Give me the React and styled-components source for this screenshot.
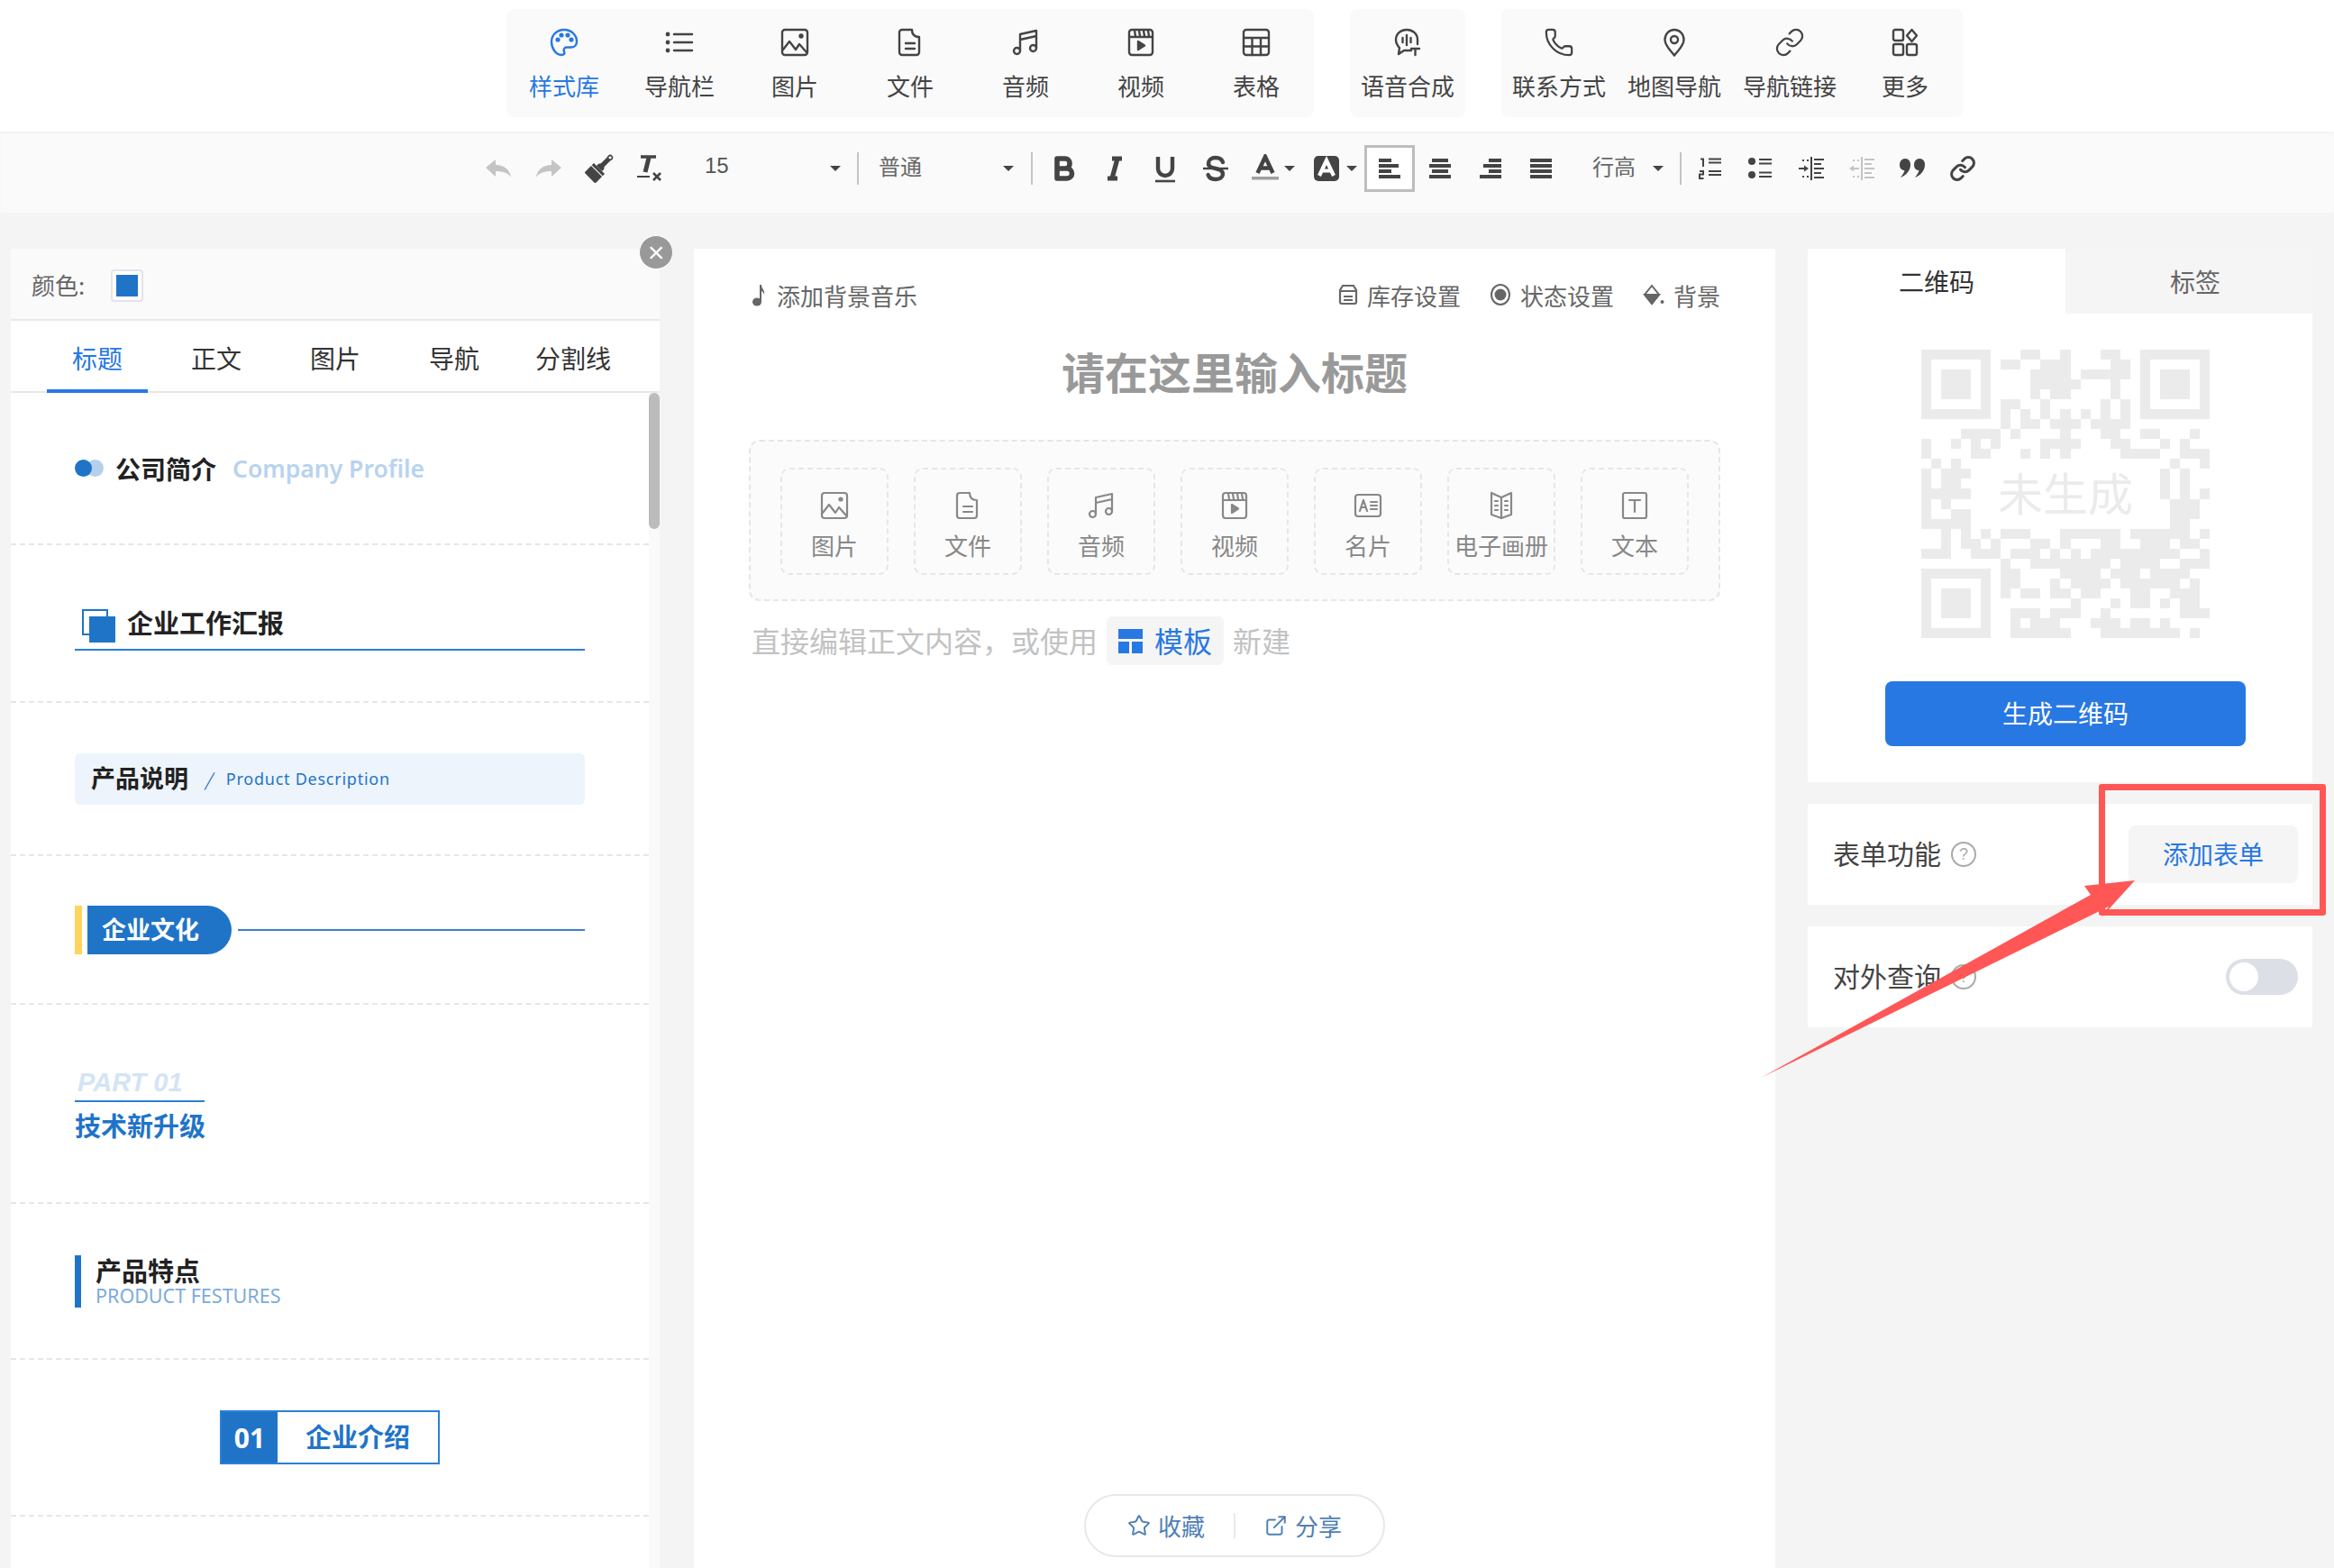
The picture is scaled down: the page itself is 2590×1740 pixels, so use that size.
import styled, { createGlobalStyle } from "styled-components";
import { Phone, Link, Star, ExternalLink } from "lucide-react";

const GlobalStyle = createGlobalStyle`
  html, body {
    margin: 0;
    padding: 0;
    background: #f4f4f4;
    font-family: "Noto Sans CJK SC", "Noto Sans", sans-serif;
    color: #333;
  }
  * { box-sizing: border-box; }
`;

const Icon = ({ size = 32, box = 32, sw = 2.4, children }) => (
  <svg width={size} height={size} viewBox={`0 0 ${box} ${box}`} fill="none" stroke="currentColor" strokeWidth={sw} strokeLinecap="round" strokeLinejoin="round">
    {children}
  </svg>
);

const Tool = ({ w = 36, h = 36, box = "0 0 18 18", sw = 2, children }) => (
  <svg width={w} height={h} viewBox={box} fill="none" stroke="currentColor" strokeWidth={sw} strokeLinecap="round" strokeLinejoin="round">
    {children}
  </svg>
);

const Palette = p => (
  <Icon {...p}>
    <path d="M16 2C8 2 2 8 2 15.500 2 23 7 30 13 30c3 0 4-2 3-4-1-2 0-4.500 3-4.500h5c4 0 6-3 6-6.500C30 8 24 2 16 2Z" />
    <circle cx="9" cy="13" r="1.400" fill="currentColor" />
    <circle cx="13" cy="8" r="1.400" fill="currentColor" />
    <circle cx="20" cy="8" r="1.400" fill="currentColor" />
    <circle cx="24" cy="13" r="1.400" fill="currentColor" />
  </Icon>
);
const ListIcon = p => (
  <Icon {...p}>
    <path d="M10 7h20M10 16h20M10 25h20" />
    <circle cx="3" cy="7" r="1.200" fill="currentColor" />
    <circle cx="3" cy="16" r="1.200" fill="currentColor" />
    <circle cx="3" cy="25" r="1.200" fill="currentColor" />
  </Icon>
);
const ImageIcon = p => (
  <Icon {...p}>
    <rect x="2" y="2" width="28" height="28" rx="3" />
    <path d="M3 24l7-9 7 9 4-6 8 9" />
    <circle cx="23" cy="9" r="1.500" fill="currentColor" />
  </Icon>
);
const FileIcon = p => (
  <Icon {...p}>
    <path d="M4 5a3 3 0 0 1 3-3h11c0 5 3 8 8 8v17a3 3 0 0 1-3 3H7a3 3 0 0 1-3-3Z" />
    <path d="M11 17h10M11 23h10" />
  </Icon>
);
const MusicIcon = p => (
  <Icon {...p}>
    <path d="M10 25V7l18-4v19M10 13l18-4" />
    <circle cx="6.500" cy="25.500" r="3.500" />
    <circle cx="24.500" cy="22.500" r="3.500" />
  </Icon>
);
const VideoIcon = p => (
  <Icon {...p}>
    <rect x="3" y="2" width="26" height="28" rx="3" />
    <path d="M3 10h26M9 3l1 6M14 3l1 6M19 3l1 6M24 3l1 6" />
    <path d="M13 15l7 4.500-7 4.500Z" fill="currentColor" />
  </Icon>
);
const TableIcon = p => (
  <Icon {...p}>
    <rect x="2" y="2" width="28" height="28" rx="3" />
    <path d="M2 11h28M2 20.500h28M11.500 11v19M21 11v19" />
  </Icon>
);
const VoiceIcon = p => (
  <Icon {...p}>
    <path d="M20 25H12l-6 4 1-7C4 19 3 16 3 13 3 6 9 2 15 2s12 4 12 11v5" />
    <path d="M15 8v11M10.500 11v5M19.500 11v5" />
    <path d="M20 23h9M24.500 23v7" />
  </Icon>
);
const PinIcon = p => (
  <Icon {...p}>
    <path d="M16 2C10 2 5.500 7 5.500 13c0 7 6.500 12 10.500 17.500C20 25 26.500 20 26.500 13 26.500 7 22 2 16 2Z" />
    <circle cx="16" cy="13" r="4" />
  </Icon>
);
const MoreIcon = p => (
  <Icon {...p}>
    <rect x="3" y="2" width="11" height="12" rx="2" />
    <path d="M23.500 2l5.500 6.500-5.500 6.500L18 8.500Z" />
    <rect x="3" y="18" width="11" height="12" rx="2" />
    <rect x="18" y="18" width="11" height="12" rx="2" />
  </Icon>
);
const CardIcon = p => (
  <Icon {...p}>
    <rect x="2" y="4" width="28" height="24" rx="3" />
    <path d="M7 22l4-12 4 12M8.500 18h5M19 12h7M19 16h7M19 20h7" />
  </Icon>
);
const BookIcon = p => (
  <Icon {...p}>
    <path d="M16 7 5 2v24l11 4 11-4V2Z" />
    <path d="M16 7v23M9 11h3M9 16h3M9 21h3M20 11h3M20 16h3M20 21h3" />
  </Icon>
);
const TextIcon = p => (
  <Icon {...p}>
    <rect x="3" y="2" width="26" height="28" rx="2" />
    <path d="M10 10h12M16 10v13" />
  </Icon>
);

const MODULES = [
  "10-11 14 18-19", "8-9 12-14 19-20", "11-14 16-20", "11-15 19", "11 13-14 19", "8-9 12 18 20",
  "8 10 12 14 16 18 20", "8 10-11 13-15 17-20", "4-7 9 14 18-19 22-23 27", "0 3 5 7 12-15 19-20 24 26",
  "0 5-6 10 12 14 20-23 26-28", "1 3 25 28", "0 2-4 24 26", "0 2-3 24 26", "0-4 24 26 28", "0 2 25-27",
  "0 3-4 25-27", "0-4 25-26", "2 4 6 8-10 14-19 21-26 28", "2 4-5 7 11-12 14 18-19 22-24 26-27",
  "0-2 5-7 9-11 13 15 17-25 28", "8 11-18 20-23 26-28", "8-9 14-17 19-21 23-26", "8-9 13 15-18 20-25 27",
  "8 10-11 13-14 16-17 21-22 25-27", "15 19 21-22 24 26-27", "9-11 13-15 18 26-28", "9 11-13 17-19 21-22 24",
  "9-14 18-25 27",
];

const Finder = ({ x, y }) => (
  <g>
    <path d={`M${x} ${y}h7v7h-7ZM${x + 1} ${y + 1}v5h5v-5Z`} fillRule="evenodd" />
    <rect x={x + 2} y={y + 2} width="3" height="3" />
  </g>
);

const QrDrawing = () => (
  <svg width="320" height="320" viewBox="0 0 29 29" fill="#ebebeb" shapeRendering="crispEdges">
    <Finder x={0} y={0} />
    <Finder x={22} y={0} />
    <Finder x={0} y={22} />
    {MODULES.map((row, y) =>
      row.split(" ").map(part => {
        const [a, b = a] = part.split("-").map(Number);
        return <rect key={`${y}-${a}`} x={a} y={y} width={b - a + 1} height="1" />;
      }),
    )}
  </svg>
);

const topGroups = [
  [
    { label: "样式库", icon: <Palette />, active: true },
    { label: "导航栏", icon: <ListIcon /> },
    { label: "图片", icon: <ImageIcon /> },
    { label: "文件", icon: <FileIcon /> },
    { label: "音频", icon: <MusicIcon /> },
    { label: "视频", icon: <VideoIcon /> },
    { label: "表格", icon: <TableIcon /> },
  ],
  [{ label: "语音合成", icon: <VoiceIcon /> }],
  [
    { label: "联系方式", icon: <Phone size={34} strokeWidth={1.6} /> },
    { label: "地图导航", icon: <PinIcon /> },
    { label: "导航链接", icon: <Link size={34} strokeWidth={1.6} /> },
    { label: "更多", icon: <MoreIcon /> },
  ],
];

const cards = [
  { label: "图片", icon: <ImageIcon sw={2.2} /> },
  { label: "文件", icon: <FileIcon sw={2.2} /> },
  { label: "音频", icon: <MusicIcon sw={2.2} /> },
  { label: "视频", icon: <VideoIcon sw={2.2} /> },
  { label: "名片", icon: <CardIcon sw={2.2} /> },
  { label: "电子画册", icon: <BookIcon sw={2.2} /> },
  { label: "文本", icon: <TextIcon sw={2.2} /> },
];

const tabs = ["标题", "正文", "图片", "导航", "分割线"];

const alignRows = {
  left: [[0, 14], [0, 22], [0, 14], [0, 24]],
  center: [[3, 18], [0, 24], [3, 18], [0, 24]],
  right: [[10, 14], [4, 20], [10, 14], [0, 24]],
  justify: [[0, 24], [0, 24], [0, 24], [0, 24]],
};

const AlignIcon = ({ type }) => (
  <svg width="24" height="22" viewBox="0 0 24 22" fill="currentColor">
    {alignRows[type].map(([x, w], i) => (
      <rect key={i} x={x} y={i * 6} width={w} height="4" />
    ))}
  </svg>
);

const Comma = ({ x = 0 }) => (
  <path transform={`translate(${x} 0)`} d="M7 0c4 0 6 3 6 7 0 6-5 12-11 14 3-4 4.500-7 4.500-8C3 13 1 10.500 1 7 1 3 3.500 0 7 0Z" />
);

const IndentIcon = ({ flip }) => (
  <svg width="28" height="26" viewBox="0 0 28 26" fill="currentColor">
    <rect x="13" y="0" width="2" height="26" />
    {[0, 1, 2, 3, 4].map(i => (
      <rect key={i} x="17" y={2 + i * 5} width={i % 2 ? 8 : 11} height="2" />
    ))}
    <rect x="4" y="3" width="2" height="2" />
    <rect x="9" y="3" width="2" height="2" />
    <rect x="4" y="21" width="2" height="2" />
    <rect x="9" y="21" width="2" height="2" />
    {flip ? (
      <path d="M0 13l5-3.500V12h6v2H5v2.500Z" />
    ) : (
      <path d="M11 13L6 9.500V12H0v2h6v2.500Z" />
    )}
  </svg>
);

export default function App() {
  return (
    <Page>
      <GlobalStyle />
      <TopBar>
        {topGroups.map((group, i) => (
          <TopGroup key={i}>
            {group.map(item => (
              <TopItem key={item.label} $active={item.active}>
                <TopIcon>{item.icon}</TopIcon>
                <span>{item.label}</span>
              </TopItem>
            ))}
          </TopGroup>
        ))}
      </TopBar>

      <Toolbar>
        <ToolBtn $muted>
          <Tool w={28} h={20} box="0 0 28 20" sw={0}>
            <path fill="currentColor" d="M0 9 11 0v6c9 0 16 5 17 14-3-5-8-7-17-7v6Z" />
          </Tool>
        </ToolBtn>
        <ToolBtn $muted>
          <Tool w={28} h={20} box="0 0 28 20" sw={0}>
            <path fill="currentColor" d="M28 9 17 0v6C8 6 1 11 0 20c3-5 8-7 17-7v6Z" />
          </Tool>
        </ToolBtn>
        <ToolBtn>
          <Tool w={32} h={32} box="0 0 30 30" sw={0}>
            <g transform="rotate(45 15 15)" fill="currentColor">
              <circle cx="15" cy="-1" r="2.200" fill="none" stroke="currentColor" strokeWidth="1.500" />
              <path d="M12.500 1h5v9l1.500 2v3H11v-3l1.500-2Z" />
              <rect x="7" y="15" width="16" height="3" />
              <rect x="7" y="19" width="16" height="10" />
            </g>
          </Tool>
        </ToolBtn>
        <ToolBtn>
          <Tool w={28} h={30} box="0 0 28 30">
            <path d="M4 2h17" strokeWidth="3.500" strokeLinecap="butt" />
            <path d="M13 3 9 19" strokeWidth="5" strokeLinecap="butt" />
            <path d="M0 24h14" strokeWidth="2" strokeLinecap="butt" />
            <path d="M18 20l8 8M26 20l-8 8" strokeWidth="2.600" strokeLinecap="butt" />
          </Tool>
        </ToolBtn>
        <Picker $w={202} $left={33} $right={18}>
          <PickerNum>15</PickerNum>
          <Caret />
        </Picker>
        <ToolDivider />
        <Picker $w={191} $left={22} $right={19}>
          <span>普通</span>
          <Caret />
        </Picker>
        <ToolDivider />
        <ToolBtn $ml={7}>
          <Tool sw={2.800}>
            <path d="M5 3.500h4.500A2.500 2.500 0 0 1 12 6v.500A2.500 2.500 0 0 1 9.500 9H5ZM5 9h5.500a2.750 2.750 0 0 1 0 5.500H5Z" />
          </Tool>
        </ToolBtn>
        <ToolBtn>
          <Tool sw={2.600}>
            <path d="M7.500 3.500H13M5 14.500h5.500M10.500 3.500l-3 11" strokeLinecap="butt" />
          </Tool>
        </ToolBtn>
        <ToolBtn>
          <Tool sw={2.200}>
            <path d="M5 2.500V9a4 4 0 0 0 8 0V2.500" strokeLinecap="butt" />
            <path d="M3.500 16h11" strokeWidth="1.300" strokeLinecap="butt" />
          </Tool>
        </ToolBtn>
        <ToolBtn>
          <Tool sw={2.200}>
            <path d="M13 5.500C12.500 4 11 3 9 3 6.500 3 5 4.500 5 6.200 5 8 6.500 8.500 9 9c2.500.5 4 1.200 4 3 0 1.800-1.500 3-4 3-2 0-3.700-1-4.200-2.500" />
            <path d="M2 9h14" strokeWidth="1.200" strokeLinecap="butt" />
          </Tool>
        </ToolBtn>
        <ColorBtn $w={69}>
          <Tool w={30} h={32} box="0 0 30 32" sw={4.500}>
            <path d="M6.500 21 15 3l8.500 18M10 15.500h10" strokeLinecap="butt" strokeLinejoin="miter" />
            <rect x="0" y="25" width="30" height="3.500" fill="#a0a0a0" stroke="none" />
          </Tool>
          <Caret $ml={6} />
        </ColorBtn>
        <ColorBtn $w={68}>
          <Tool w={28} h={28} box="0 0 28 28" sw={0}>
            <rect width="28" height="28" rx="5" fill="currentColor" />
            <path d="M6 22 14 5l8 17M9.500 16.500h9" stroke="#fff" strokeWidth="4.200" strokeLinecap="butt" strokeLinejoin="miter" />
          </Tool>
          <Caret $ml={8} />
        </ColorBtn>
        <ToolBtn $active><AlignIcon type="left" /></ToolBtn>
        <ToolBtn><AlignIcon type="center" /></ToolBtn>
        <ToolBtn><AlignIcon type="right" /></ToolBtn>
        <ToolBtn><AlignIcon type="justify" /></ToolBtn>
        <Picker $w={126} $left={29} $right={18}>
          <span>行高</span>
          <Caret />
        </Picker>
        <ToolDivider $mr={4} />
        <ToolBtn>
          <Tool w={26} h={24} box="0 0 26 24" sw={2}>
            <path d="M2 1.500h3V10M1 15h4v3.500H1V23h4.500" strokeLinecap="butt" strokeLinejoin="miter" />
            <path d="M11 1.500h14M11 5.500h14M11 15h14M11 19h14" strokeLinecap="butt" />
          </Tool>
        </ToolBtn>
        <ToolBtn>
          <Tool w={28} h={24} box="0 0 28 24" sw={2}>
            <circle cx="4" cy="4" r="4" fill="currentColor" stroke="none" />
            <circle cx="4" cy="19" r="4" fill="currentColor" stroke="none" />
            <path d="M12 2h14M12 6.500h14M12 16.500h14M12 21h14" strokeLinecap="butt" />
          </Tool>
        </ToolBtn>
        <ToolBtn><IndentIcon /></ToolBtn>
        <ToolBtn $muted><IndentIcon flip /></ToolBtn>
        <ToolBtn>
          <Tool w={30} h={22} box="0 0 30 22" sw={0}>
            <g fill="currentColor">
              <Comma />
              <Comma x={16} />
            </g>
          </Tool>
        </ToolBtn>
        <ToolBtn>
          <Link size={30} strokeWidth={2.4} />
        </ToolBtn>
      </Toolbar>

      <Main>
        <LeftPanel>
          <CloseDot>×</CloseDot>
          <ColorRow>
            <span>颜色:</span>
            <Swatch><i /></Swatch>
          </ColorRow>
          <TabRow>
            {tabs.map((t, i) => (
              <TabItem key={t} $active={i === 0}>{t}</TabItem>
            ))}
          </TabRow>
          <ScrollArea>
            <StyleList>
              <StyleItem $h={169}>
                <TitleOne>
                  <Dots><i /><b /></Dots>
                  <strong>公司简介</strong>
                  <em>Company Profile</em>
                </TitleOne>
              </StyleItem>
              <StyleItem $h={175} $pt={10}>
                <TitleTwo>
                  <Squares><i /><b /></Squares>
                  <strong>企业工作汇报</strong>
                </TitleTwo>
              </StyleItem>
              <StyleItem $h={170}>
                <TitleThree>
                  <strong>产品说明</strong>
                  <i>/</i>
                  <span>Product Description</span>
                </TitleThree>
              </StyleItem>
              <StyleItem $h={165}>
                <TitleFour>
                  <i />
                  <strong>企业文化</strong>
                  <b />
                </TitleFour>
              </StyleItem>
              <StyleItem $h={221}>
                <TitleFive>
                  <em>PART 01</em>
                  <strong>技术新升级</strong>
                </TitleFive>
              </StyleItem>
              <StyleItem $h={173}>
                <TitleSix>
                  <strong>产品特点</strong>
                  <span>PRODUCT FESTURES</span>
                </TitleSix>
              </StyleItem>
              <StyleItem $h={174}>
                <TitleSeven>
                  <b>01</b>
                  <strong>企业介绍</strong>
                </TitleSeven>
              </StyleItem>
            </StyleList>
            <ScrollTrack><i /></ScrollTrack>
          </ScrollArea>
        </LeftPanel>

        <Editor>
          <EditorBar>
            <BarLink>
              <svg width="16" height="26" viewBox="0 0 16 26" fill="currentColor">
                <ellipse cx="6" cy="21" rx="5" ry="4.500" />
                <path d="M9 2h2c0 5 4 5 3 11-1-3-2.500-4-3-4v12H9Z" />
              </svg>
              <span>添加背景音乐</span>
            </BarLink>
            <BarSide>
              <BarLink $gap={10}>
                <svg width="22" height="24" viewBox="0 0 22 24" fill="none" stroke="currentColor" strokeWidth="2.200">
                  <path d="M5 2h12l3 5v13a2 2 0 0 1-2 2H4a2 2 0 0 1-2-2V7Z" />
                  <path d="M3 8h16M6 14h10M6 18h10" />
                </svg>
                <span>库存设置</span>
              </BarLink>
              <BarLink $gap={10}>
                <svg width="24" height="26" viewBox="0 0 24 26" fill="none" stroke="currentColor" strokeWidth="2">
                  <ellipse cx="12" cy="13" rx="10" ry="11" />
                  <circle cx="12" cy="13" r="5.500" fill="currentColor" />
                </svg>
                <span>状态设置</span>
              </BarLink>
              <BarLink $gap={10}>
                <svg width="24" height="26" viewBox="0 0 24 26" fill="none" stroke="currentColor" strokeWidth="2">
                  <path d="M10 3 2 13l8 10 8-10Z" />
                  <path d="M2 13h16l-8 10Z" fill="currentColor" />
                  <circle cx="21.500" cy="21" r="2" fill="currentColor" stroke="none" />
                </svg>
                <span>背景</span>
              </BarLink>
            </BarSide>
          </EditorBar>
          <PageTitle>请在这里输入标题</PageTitle>
          <InsertBox>
            {cards.map(c => (
              <InsertCard key={c.label}>
                {c.icon}
                <span>{c.label}</span>
              </InsertCard>
            ))}
          </InsertBox>
          <Hint>
            <span>直接编辑正文内容，或使用</span>
            <TemplateBtn>
              <svg width="27" height="27" viewBox="0 0 27 27" fill="currentColor">
                <rect width="27" height="11" />
                <rect y="14" width="12" height="13" />
                <rect x="15" y="14" width="12" height="13" />
              </svg>
              <span>模板</span>
            </TemplateBtn>
            <span>新建</span>
          </Hint>
          <FloatPill>
            <PillAction>
              <Star size={26} strokeWidth={1.8} />
              <span>收藏</span>
            </PillAction>
            <PillSplit />
            <PillAction>
              <ExternalLink size={26} strokeWidth={1.8} />
              <span>分享</span>
            </PillAction>
          </FloatPill>
        </Editor>

        <RightSide>
          <QrCard>
            <QrTabs>
              <QrTab $active>二维码</QrTab>
              <QrTab $pl={14}>标签</QrTab>
            </QrTabs>
            <QrBody>
              <QrBox>
                <QrDrawing />
                <QrLabel>未生成</QrLabel>
              </QrBox>
              <PrimaryBtn>生成二维码</PrimaryBtn>
            </QrBody>
          </QrCard>
          <OptionRow>
            <OptionLabel>
              <span>表单功能</span>
              <Help>?</Help>
            </OptionLabel>
            <SoftBtn>添加表单</SoftBtn>
          </OptionRow>
          <OptionRow>
            <OptionLabel>
              <span>对外查询</span>
              <Help>?</Help>
            </OptionLabel>
            <Toggle><i /></Toggle>
          </OptionRow>
        </RightSide>
      </Main>

      <RedFrame />
      <RedArrow width="2590" height="1740" viewBox="0 0 2590 1740">
        <polygon points="1954,1196 2320,993 2313,983 2369,977 2331,1019 2340,1006" fill="#ff5656" />
      </RedArrow>
    </Page>
  );
}

const Page = styled.div`
  position: relative;
  width: 2590px;
  height: 1740px;
  overflow: hidden;
  background: #f4f4f4;
`;

const TopBar = styled.div`
  display: flex;
  gap: 40px;
  height: 146px;
  padding: 10px 0 0 562px;
  background: #fff;
`;

const TopGroup = styled.div`
  display: flex;
  height: 120px;
  border-radius: 8px;
  background: #fafafa;
`;

const TopItem = styled.div`
  display: flex;
  flex-direction: column;
  align-items: center;
  width: 128px;
  padding-top: 21px;
  font-size: 26px;
  line-height: 34px;
  color: ${p => (p.$active ? "#2878e3" : "#444")};
`;

const TopIcon = styled.div`
  display: flex;
  align-items: center;
  justify-content: center;
  height: 32px;
  margin-bottom: 15px;
`;

const Toolbar = styled.div`
  display: flex;
  align-items: center;
  height: 90px;
  padding: 0 0 9px 525px;
  background: #fafafa;
  box-shadow: inset 0 2px 2px #f4f4f4;
  color: #444;
`;

const ToolBtn = styled.div`
  display: flex;
  align-items: center;
  justify-content: center;
  width: 56px;
  height: 52px;
  margin-left: ${p => p.$ml || 0}px;
  color: ${p => (p.$muted ? "#c4c4c4" : "#444")};
  background: ${p => (p.$active ? "#fff" : "transparent")};
  border: ${p => (p.$active ? "3px solid #bdbdbd" : "none")};
`;

const ColorBtn = styled.div`
  display: flex;
  align-items: center;
  width: ${p => p.$w}px;
  height: 52px;
  padding-left: 12px;
`;

const Picker = styled.div`
  display: flex;
  align-items: center;
  justify-content: space-between;
  width: ${p => p.$w}px;
  height: 40px;
  padding: 0 ${p => p.$right}px 0 ${p => p.$left}px;
  font-size: 24px;
  line-height: 34px;
  color: #666;
  span {
    margin-top: -5px;
  }
`;

const PickerNum = styled.span`
  font-family: "Liberation Sans", sans-serif;
  font-size: 24px;
  color: #555;
`;

const Caret = styled.i`
  width: 0;
  height: 0;
  margin-left: ${p => p.$ml || 0}px;
  border-left: 6px solid transparent;
  border-right: 6px solid transparent;
  border-top: 6px solid #444;
`;

const ToolDivider = styled.div`
  flex: none;
  width: 2px;
  height: 36px;
  margin-right: ${p => p.$mr || 0}px;
  background: #c4c4c4;
`;

const Main = styled.div`
  display: flex;
  align-items: flex-start;
  height: 1504px;
  padding: 40px 0 0 12px;
`;

const LeftPanel = styled.div`
  position: relative;
  display: flex;
  flex-direction: column;
  flex: none;
  width: 720px;
  height: 1464px;
  background: #fff;
`;

const CloseDot = styled.div`
  position: absolute;
  top: -15px;
  right: -15px;
  display: flex;
  align-items: center;
  justify-content: center;
  width: 38px;
  height: 38px;
  border-radius: 50%;
  background: #999;
  border: 1px solid #fff;
  color: #fff;
  font-family: "Liberation Sans", sans-serif;
  font-size: 32px;
  line-height: 1;
`;

const ColorRow = styled.div`
  display: flex;
  align-items: center;
  gap: 29px;
  height: 80px;
  padding-left: 23px;
  background: #fafafa;
  border-bottom: 2px solid #e8e8e8;
  font-size: 26px;
  color: #666;
`;

const Swatch = styled.div`
  display: flex;
  align-items: center;
  justify-content: center;
  width: 36px;
  height: 36px;
  margin-top: 3px;
  border: 2px solid #e3e3ea;
  border-radius: 4px;
  background: #fff;
  i {
    width: 24px;
    height: 24px;
    background: #1f74c8;
  }
`;

const TabRow = styled.div`
  display: flex;
  gap: 20px;
  height: 80px;
  padding-left: 40px;
  border-bottom: 2px solid #e8e8e8;
`;

const TabItem = styled.div`
  width: 112px;
  height: 80px;
  padding-top: 21px;
  text-align: center;
  font-size: 28px;
  line-height: 40px;
  white-space: nowrap;
  color: ${p => (p.$active ? "#2878e3" : "#333")};
  border-bottom: 4px solid ${p => (p.$active ? "#2878e3" : "transparent")};
`;

const ScrollArea = styled.div`
  display: flex;
  flex: 1;
  min-height: 0;
`;

const StyleList = styled.div`
  flex: 1;
`;

const ScrollTrack = styled.div`
  flex: none;
  width: 12px;
  background: #fafafa;
  i {
    display: block;
    height: 151px;
    border-radius: 6px;
    background: #bcbcbc;
  }
`;

const StyleItem = styled.div`
  display: flex;
  flex-direction: column;
  justify-content: center;
  height: ${p => p.$h}px;
  padding: ${p => p.$pt || 0}px 71px 0;
  border-bottom: 2px dashed #e6e6e6;
`;

const TitleOne = styled.div`
  display: flex;
  align-items: center;
  strong {
    margin-left: 13px;
    font-size: 28px;
    line-height: 40px;
    color: #222;
  }
  em {
    margin-left: 18px;
    font-family: "Noto Sans", sans-serif;
    font-style: normal;
    font-weight: 600;
    font-size: 26.5px;
    color: #b8d3ee;
  }
`;

const Dots = styled.div`
  display: flex;
  width: 32px;
  i,
  b {
    display: block;
    width: 19px;
    height: 19px;
    border-radius: 50%;
  }
  i {
    position: relative;
    z-index: 1;
    background: #1f74c8;
  }
  b {
    margin-left: -6px;
    background: #b4d0ec;
  }
`;

const TitleTwo = styled.div`
  display: flex;
  align-items: center;
  height: 51px;
  padding: 0 0 2px 8px;
  border-bottom: 2px solid #2b7fd6;
  strong {
    margin: -9px 0 0 13px;
    font-size: 29px;
    color: #222;
  }
`;

const Squares = styled.div`
  position: relative;
  width: 37px;
  height: 37px;
  i {
    position: absolute;
    top: 0;
    left: 0;
    width: 29px;
    height: 29px;
    border: 2px solid #1f74c8;
  }
  b {
    position: absolute;
    top: 8px;
    left: 8px;
    width: 29px;
    height: 29px;
    background: #1f74c8;
  }
`;

const TitleThree = styled.div`
  display: flex;
  align-items: center;
  height: 57px;
  padding-left: 18px;
  border-radius: 6px;
  background: #edf4fb;
  strong {
    margin-top: -3px;
    font-size: 27px;
    color: #222;
  }
  i {
    margin-left: 18px;
    color: #1f74c8;
    font-size: 20px;
  }
  span {
    margin-left: 16px;
    font-family: "Noto Sans", sans-serif;
    font-size: 18px;
    letter-spacing: 0.75px;
    color: #1f74c8;
  }
`;

const TitleFour = styled.div`
  display: flex;
  align-items: center;
  height: 54px;
  i {
    width: 8px;
    height: 54px;
    background: #ffd35c;
  }
  strong {
    display: flex;
    align-items: center;
    width: 160px;
    height: 54px;
    margin-left: 6px;
    padding: 0 0 3px 16px;
    border-radius: 0 27px 27px 0;
    background: #1f74c8;
    color: #fff;
    font-size: 27px;
  }
  b {
    flex: 1;
    height: 2px;
    margin-left: 7px;
    background: #3a80c9;
  }
`;

const TitleFive = styled.div`
  display: flex;
  flex-direction: column;
  align-items: flex-start;
  em {
    width: 144px;
    padding-left: 3px;
    border-bottom: 2px solid #2b7fd6;
    font-family: "Liberation Sans", sans-serif;
    font-weight: 700;
    font-size: 29px;
    line-height: 39px;
    color: #d3e4f5;
  }
  strong {
    margin-top: 5px;
    font-size: 29px;
    line-height: 40px;
    color: #1f74c8;
  }
`;

const TitleSix = styled.div`
  display: flex;
  flex-direction: column;
  justify-content: center;
  height: 58px;
  padding-left: 16px;
  border-left: 7px solid #1f74c8;
  strong {
    font-size: 29px;
    line-height: 32px;
    color: #222;
  }
  span {
    font-family: "Noto Sans", sans-serif;
    font-size: 21.5px;
    line-height: 26px;
    color: #7cabdc;
  }
`;

const TitleSeven = styled.div`
  display: flex;
  align-self: center;
  width: 244px;
  height: 60px;
  border: 2px solid #2b7fd6;
  b {
    display: flex;
    align-items: center;
    justify-content: center;
    width: 62px;
    background: #1f74c8;
    color: #fff;
    font-family: "Noto Sans", sans-serif;
    font-size: 30px;
  }
  strong {
    flex: 1;
    text-align: center;
    font-size: 29px;
    line-height: 52px;
    color: #1f74c8;
  }
`;

const Editor = styled.div`
  position: relative;
  flex: none;
  width: 1200px;
  height: 1464px;
  margin-left: 38px;
  padding: 35px 61px 0;
  background: #fff;
`;

const EditorBar = styled.div`
  display: flex;
  align-items: center;
  justify-content: space-between;
  height: 32px;
  padding-left: 3px;
`;

const BarSide = styled.div`
  display: flex;
  gap: 32px;
`;

const BarLink = styled.div`
  display: flex;
  align-items: center;
  gap: ${p => p.$gap || 12}px;
  font-size: 26px;
  color: #666;
`;

const PageTitle = styled.div`
  margin-top: 38px;
  text-align: center;
  font-size: 48px;
  line-height: 60px;
  font-weight: 700;
  color: #999;
`;

const InsertBox = styled.div`
  display: flex;
  gap: 28px;
  height: 179px;
  margin-top: 47px;
  padding: 29px 33px;
  border: 2px dashed #e6e6e6;
  border-radius: 12px;
  background: #fbfbfb;
`;

const InsertCard = styled.div`
  display: flex;
  flex-direction: column;
  align-items: center;
  flex: none;
  width: 120px;
  height: 119px;
  padding-top: 24px;
  border: 2px dashed #e6e6e6;
  border-radius: 10px;
  color: #888;
  span {
    margin-top: 11px;
    font-size: 26px;
    line-height: 34px;
    white-space: nowrap;
  }
`;

const Hint = styled.div`
  display: flex;
  align-items: center;
  gap: 10px;
  height: 54px;
  margin-top: 17px;
  padding-left: 3px;
  font-size: 32px;
  line-height: 46px;
  color: #c2c2c2;
  > span {
    margin-top: -3px;
  }
`;

const TemplateBtn = styled.div`
  display: flex;
  align-items: center;
  gap: 13px;
  width: 130px;
  height: 54px;
  padding-left: 13px;
  border-radius: 6px;
  background: #f5f5f5;
  color: #2878e3;
  span {
    margin-top: -3px;
  }
`;

const FloatPill = styled.div`
  position: absolute;
  left: 433px;
  bottom: 12px;
  display: flex;
  align-items: center;
  justify-content: center;
  width: 334px;
  height: 70px;
  border: 2px solid #e8e8e8;
  border-radius: 35px;
  background: #fff;
`;

const PillAction = styled.div`
  display: flex;
  align-items: center;
  gap: 8px;
  font-size: 26px;
  color: #4f7fb5;
  span {
    margin-top: -2px;
  }
`;

const PillSplit = styled.div`
  width: 2px;
  height: 28px;
  margin: 0 32px;
  background: #eaeaea;
`;

const RightSide = styled.div`
  display: flex;
  flex-direction: column;
  flex: none;
  gap: 24px;
  width: 560px;
  margin-left: 36px;
`;

const QrCard = styled.div`
  display: flex;
  flex-direction: column;
`;

const QrTabs = styled.div`
  display: grid;
  grid-template-columns: 286px 1fr;
  height: 72px;
`;

const QrTab = styled.div`
  display: flex;
  align-items: center;
  justify-content: center;
  padding-left: ${p => p.$pl || 0}px;
  font-size: 28px;
  background: ${p => (p.$active ? "#fff" : "#f5f5f5")};
  color: ${p => (p.$active ? "#333" : "#666")};
`;

const QrBody = styled.div`
  display: flex;
  flex-direction: column;
  align-items: center;
  gap: 48px;
  padding: 40px 0 40px 12px;
  background: #fff;
`;

const QrBox = styled.div`
  position: relative;
  width: 320px;
  height: 320px;
  line-height: 0;
`;

const QrLabel = styled.div`
  position: absolute;
  top: 133px;
  left: 0;
  width: 100%;
  text-align: center;
  font-size: 50px;
  line-height: 48px;
  color: #ebebeb;
`;

const PrimaryBtn = styled.div`
  display: flex;
  align-items: center;
  justify-content: center;
  width: 400px;
  height: 72px;
  padding-bottom: 2px;
  border-radius: 8px;
  background: #2878e3;
  color: #fff;
  font-size: 28px;
`;

const OptionRow = styled.div`
  display: flex;
  align-items: center;
  justify-content: space-between;
  height: 112px;
  padding: 0 16px 0 28px;
  background: #fff;
`;

const OptionLabel = styled.div`
  display: flex;
  align-items: center;
  gap: 11px;
  font-size: 30px;
  color: #444;
  span:first-child {
    margin-top: -5px;
  }
`;

const Help = styled.span`
  display: flex;
  align-items: center;
  justify-content: center;
  width: 28px;
  height: 28px;
  border: 2px solid #aaa;
  border-radius: 50%;
  font-family: "Liberation Sans", sans-serif;
  font-size: 18px;
  color: #aaa;
`;

const SoftBtn = styled.div`
  display: flex;
  align-items: center;
  justify-content: center;
  width: 188px;
  height: 64px;
  padding-bottom: 3px;
  border-radius: 8px;
  background: #f5f5f5;
  color: #2878e3;
  font-size: 28px;
`;

const Toggle = styled.div`
  display: flex;
  align-items: center;
  width: 80px;
  height: 40px;
  padding-left: 4px;
  border-radius: 20px;
  background: #dcdfe6;
  i {
    width: 32px;
    height: 32px;
    border-radius: 50%;
    background: #fff;
  }
`;

const RedFrame = styled.div`
  position: absolute;
  left: 2329px;
  top: 870px;
  width: 252px;
  height: 146px;
  border: 7px solid #ff5656;
  border-radius: 3px;
`;

const RedArrow = styled.svg`
  position: absolute;
  left: 0;
  top: 0;
  pointer-events: none;
`;
